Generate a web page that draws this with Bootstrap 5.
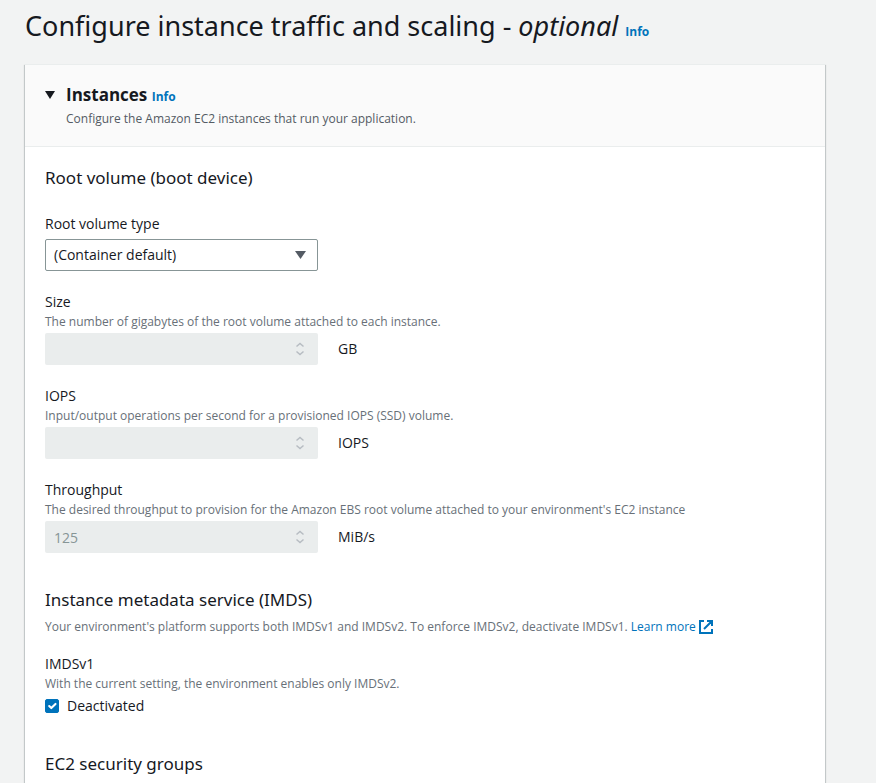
<!DOCTYPE html>
<html lang="en">
<head>
<meta charset="utf-8">
<meta name="viewport" content="width=device-width, initial-scale=1">
<title>Configure instance traffic and scaling</title>
<link href="https://cdn.jsdelivr.net/npm/bootstrap@5.3.0/dist/css/bootstrap.min.css" rel="stylesheet">
<style>
  body { font-family: "Open Sans", "Noto Sans", sans-serif; font-size: 14px; line-height: 22px; color: #16191f; background: #f2f3f3; }
  a { color: #0073bb; text-decoration: none; }
  .page-wrap { padding: 9px 51px 0 25px; }
  .page-title { font-family: "Noto Sans", sans-serif; font-size: 27px; line-height: 34px; font-weight: 400; margin: 0 0 21px; }
  .info-link { font-family: "Open Sans", sans-serif; font-size: 12px; line-height: 16px; font-weight: 700; }
  .panel { background: #fff; border-top: 1px solid #eaeded; box-shadow: 0 1px 1px 0 rgba(0, 28, 36, .3), 1px 1px 1px 0 rgba(0, 28, 36, .15), -1px 1px 1px 0 rgba(0, 28, 36, .15); }
  .panel-head { background: #fafafa; border-bottom: 1px solid #eaeded; padding: 19px 20px 18px 19px; }
  .panel-title { font-size: 17px; line-height: 22px; font-weight: 700; margin: 0 0 4px; }
  .panel-body { padding: 20px; }
  .toggle { width: 14px; height: 22px; line-height: 0; text-align: left; }
  .section-title { font-family: "Noto Sans", sans-serif; font-size: 17px; line-height: 22px; font-weight: 400; margin: 0; }
  .section-next { margin: 36px 0 6px; }
  .hint { font-size: 12px; line-height: 20px; color: #687078; }
  .head-hint { line-height: 18px; color: #545b64; }
  .field-hint { line-height: 18px; padding-bottom: 2px; }
  .link-icon { vertical-align: -3px; }
  .fields { display: grid; gap: 20px; }
  .control { width: 273px; }
  .control-box { height: 32px; border-radius: 2px; padding: 4px 9px; font-size: 14px; line-height: 22px; color: #16191f; }
  .control-box.form-select { border: 1px solid #879596; padding: 4px 8px; background: #fff; }
  .control-box.form-control { border: 0; background: #eaeded; appearance: textfield; }
  .control-box.form-control::-webkit-inner-spin-button { display: none; }
  .control-box.form-control::placeholder { color: #879596; }
  .control-icon { position: absolute; right: 12px; top: 9px; pointer-events: none; }
  .tick { width: 14px; height: 14px; }
  .tick.form-check-input[type=checkbox] { border-radius: 2px; }
  .tick:checked { background-color: #0073bb; border-color: #0073bb; }
  .tick.form-check-input:checked[type=checkbox] { background-size: 14px 14px; }
</style>
<script src="https://cdn.jsdelivr.net/npm/bootstrap@5.3.0/dist/js/bootstrap.bundle.min.js" defer></script>
</head>
<body>
<svg class="d-none" aria-hidden="true">
  <symbol id="spin" viewBox="0 0 12 14"><path d="M2.500 4.500 6 1.500l3.500 3M2.500 9.500l3.500 3 3.500-3" fill="none" stroke="#b7bcc2" stroke-width="1.500"/></symbol>
</svg>
<main class="page-wrap">
  <h1 class="page-title">Configure instance traffic and scaling - <em>optional</em> <a href="#" class="info-link">Info</a></h1>
  <section class="panel">
    <header class="panel-head d-flex gap-2">
      <button type="button" class="btn border-0 p-0 toggle" aria-label="Collapse Instances" aria-expanded="true">
        <svg width="12" height="10" viewBox="0 0 12 10"><path d="M1 1h10L6 9z" fill="#16191f"/></svg>
      </button>
      <div>
        <h2 class="panel-title">Instances <a href="#" class="info-link">Info</a></h2>
        <p class="hint head-hint mb-0">Configure the Amazon EC2 instances that run your application.</p>
      </div>
    </header>
    <div class="panel-body">
      <h3 class="section-title mb-4">Root volume (boot device)</h3>
      <div class="fields">
        <div>
          <label for="volType" class="d-block mb-1">Root volume type</label>
          <div class="control position-relative">
            <select id="volType" class="form-select control-box"><option>(Container default)</option></select>
            <svg class="control-icon" width="11" height="12" viewBox="0 0 11 12"><path d="M0 3h11L5.500 11z" fill="#545b64"/></svg>
          </div>
        </div>
        <div>
          <label for="size" class="d-block">Size</label>
          <div class="hint field-hint" id="sizeHint">The number of gigabytes of the root volume attached to each instance.</div>
          <div class="d-flex align-items-center column-gap-3">
            <div class="control position-relative">
              <input id="size" type="number" class="form-control control-box" aria-describedby="sizeHint" disabled>
              <svg class="control-icon" width="12" height="14"><use href="#spin"/></svg>
            </div>
            <span class="ps-1">GB</span>
          </div>
        </div>
        <div>
          <label for="iops" class="d-block">IOPS</label>
          <div class="hint field-hint" id="iopsHint">Input/output operations per second for a provisioned IOPS (SSD) volume.</div>
          <div class="d-flex align-items-center column-gap-3">
            <div class="control position-relative">
              <input id="iops" type="number" class="form-control control-box" aria-describedby="iopsHint" disabled>
              <svg class="control-icon" width="12" height="14"><use href="#spin"/></svg>
            </div>
            <span class="ps-1">IOPS</span>
          </div>
        </div>
        <div>
          <label for="throughput" class="d-block">Throughput</label>
          <div class="hint field-hint" id="thrHint">The desired throughput to provision for the Amazon EBS root volume attached to your environment's EC2 instance</div>
          <div class="d-flex align-items-center column-gap-3">
            <div class="control position-relative">
              <input id="throughput" type="number" class="form-control control-box" placeholder="125" aria-describedby="thrHint" disabled>
              <svg class="control-icon" width="12" height="14"><use href="#spin"/></svg>
            </div>
            <span class="ps-1">MiB/s</span>
          </div>
        </div>
      </div>
      <h3 class="section-title section-next">Instance metadata service (IMDS)</h3>
      <p class="hint mb-3">Your environment's platform supports both IMDSv1 and IMDSv2. To enforce IMDSv2, deactivate IMDSv1. <a href="#">Learn more <svg class="link-icon" width="14" height="14" viewBox="0 0 14 14" fill="none" stroke="#0073bb" stroke-width="2" aria-hidden="true"><path d="M5 1H1v12h12V9M8 1h5v5M13 1 5 9"/></svg></a></p>
      <div>
        <div>IMDSv1</div>
        <div class="hint field-hint">With the current setting, the environment enables only IMDSv2.</div>
        <div class="d-flex align-items-center gap-2">
          <input class="form-check-input tick m-0" type="checkbox" id="imds" checked>
          <label for="imds">Deactivated</label>
        </div>
      </div>
      <h3 class="section-title section-next">EC2 security groups</h3>
    </div>
  </section>
</main>
</body>
</html>
